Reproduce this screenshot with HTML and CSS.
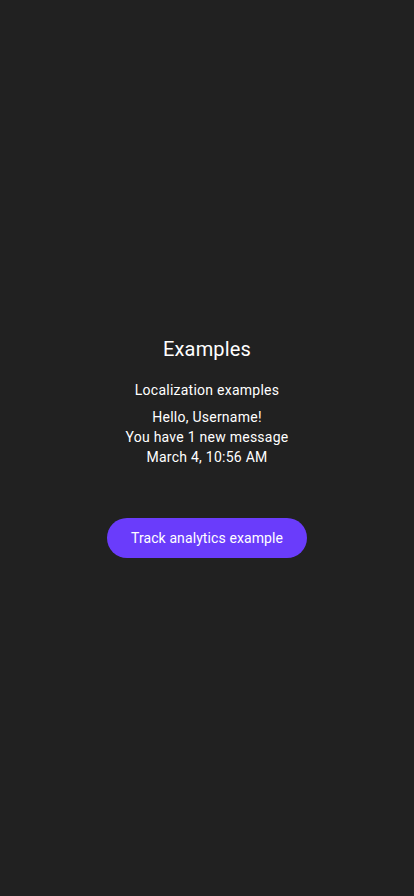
FILE: index.html
```html
<!DOCTYPE html>
<html>
<head>
<meta charset="utf-8">
<link rel="stylesheet" href="styles.css">
</head>
<body>
<main class="screen">
  <h1 class="title">Examples</h1>
  <p class="subtitle">Localization examples</p>
  <div class="lines">
    <p>Hello, Username!</p>
    <p>You have 1 new message</p>
    <p>March 4, 10:56 AM</p>
  </div>
  <button class="btn">Track analytics example</button>
</main>
</body>
</html>
```

FILE: styles.css
```css
html, body {
  margin: 0;
  padding: 0;
  background: #212121;
}
.screen {
  height: 896px;
  box-sizing: border-box;
  padding-bottom: 2px;
  display: flex;
  flex-direction: column;
  align-items: center;
  justify-content: center;
  font-family: Roboto, "Noto Sans", sans-serif;
  color: #ffffff;
  text-align: center;
}
.title {
  margin: 0;
  font-size: 20px;
  font-weight: 400;
  line-height: 24px;
  letter-spacing: 0.15px;
}
.subtitle {
  margin: 19px 0 0;
  font-size: 14px;
  line-height: 20px;
  letter-spacing: 0.25px;
}
.lines {
  margin-top: 7px;
}
.lines p {
  margin: 0;
  font-size: 14px;
  line-height: 20px;
  letter-spacing: 0.25px;
}
.btn {
  margin-top: 51px;
  width: 200px;
  height: 40px;
  border: none;
  border-radius: 20px;
  background: #6a3cfb;
  color: #ffffff;
  font-family: Roboto, "Noto Sans", sans-serif;
  font-size: 14px;
  font-weight: 400;
  letter-spacing: 0.1px;
}
```
